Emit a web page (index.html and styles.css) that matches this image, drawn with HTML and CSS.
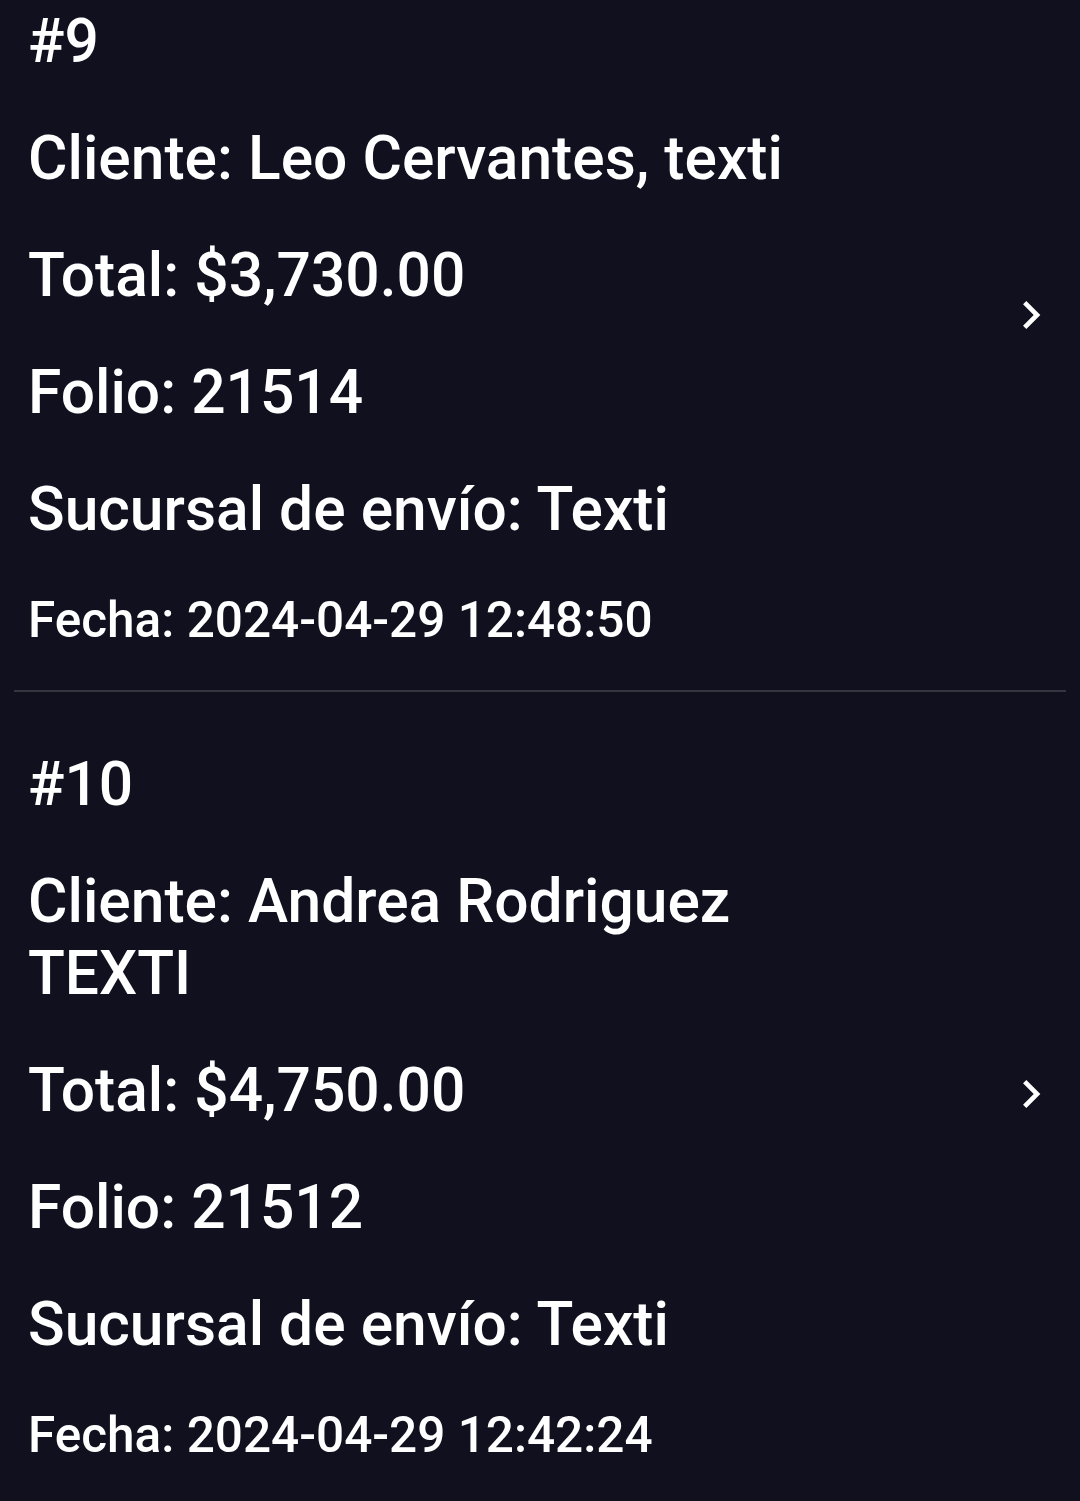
FILE: index.html
```html
<!DOCTYPE html>
<html lang="es">
<head>
<meta charset="UTF-8">
<title>Pedidos</title>
<link rel="stylesheet" href="styles.css">
</head>
<body>
  <div class="list">
    <div class="order">
      <div class="info">
        <p class="num">#9</p>
        <p class="line">Cliente: Leo Cervantes, texti</p>
        <p class="line">Total: $3,730.00</p>
        <p class="line">Folio: 21514</p>
        <p class="line">Sucursal de envío: Texti</p>
        <p class="date">Fecha: 2024-04-29 12:48:50</p>
      </div>
      <svg class="chevron" viewBox="0 0 24 24"><path d="M10 6 8.59 7.41 13.17 12l-4.58 4.59L10 18l6-6z"/></svg>
    </div>
    <div class="divider"></div>
    <div class="order">
      <div class="info">
        <p class="num">#10</p>
        <p class="line">Cliente: Andrea Rodriguez TEXTI</p>
        <p class="line">Total: $4,750.00</p>
        <p class="line">Folio: 21512</p>
        <p class="line">Sucursal de envío: Texti</p>
        <p class="date">Fecha: 2024-04-29 12:42:24</p>
      </div>
      <svg class="chevron" viewBox="0 0 24 24"><path d="M10 6 8.59 7.41 13.17 12l-4.58 4.59L10 18l6-6z"/></svg>
    </div>
    <div class="divider"></div>
  </div>
</body>
</html>
```

FILE: styles.css
```css
body {
  background: #11101f;
  color: #fff;
  font-family: Roboto, "Noto Sans", sans-serif;
  font-weight: 500;
  margin: 0;
  height: 1501px;
  overflow: hidden;
}
.list {
  margin-top: -51px; /* list is scrolled */
}
.order {
  display: flex;
  align-items: center;
  padding: 57px 21px 41px 28px;
}
.info {
  width: 830px;
  display: flex;
  flex-direction: column;
  gap: 45px;
}
.info p {
  margin: 0;
}
.num,
.line {
  font-size: 60.5px;
  line-height: 72px;
}
.date {
  font-size: 49.5px;
  line-height: 58px;
}
.chevron {
  width: 56px;
  height: 56px;
  fill: #fff;
  margin-left: auto;
  margin-bottom: 26px;
}
.divider {
  height: 2px;
  background: #35343f;
  margin: 0 14px;
}
```
